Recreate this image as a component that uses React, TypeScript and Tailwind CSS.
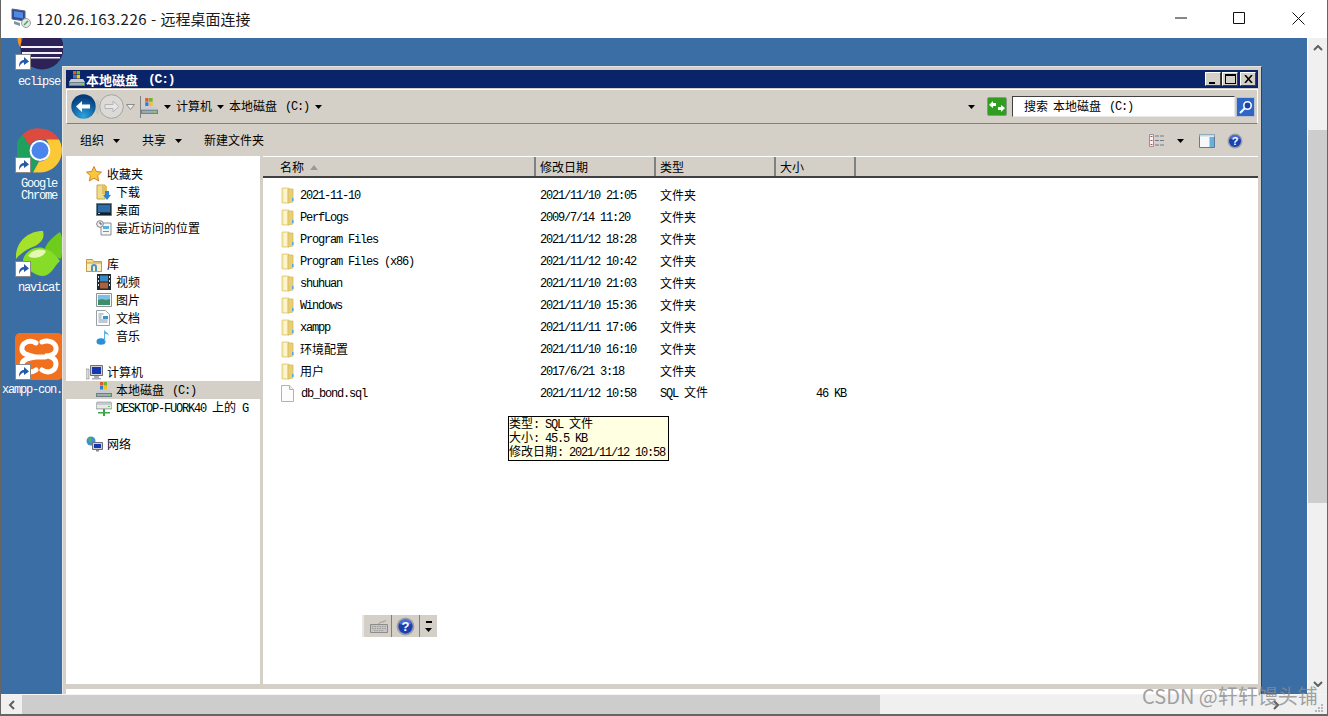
import type { ReactNode } from 'react'

function T({ text, bold }: { text: string; bold?: boolean }) {
  const parts = text.split(/([\u3400-\u9fff]+)/)
  return (
    <span className={`whitespace-pre text-[12px] leading-none ${bold ? 'font-bold' : ''}`}>
      {parts.map((p, i) =>
        /[\u3400-\u9fff]/.test(p) ? (
          <span key={i} className="inline-block font-['Noto_Sans_CJK_SC',sans-serif] leading-none">{p}</span>
        ) : (
          <span key={i} className="inline-block font-['Liberation_Mono',monospace] leading-none tracking-[-1.2px]">{p}</span>
        )
      )}
    </span>
  )
}

function DriveLabel() {
  return (
    <span className="flex items-center">
      <T text="本地磁盘" />
      <span className="ml-[8px] flex"><T text="(C:)" /></span>
    </span>
  )
}

function DriveIcon({ size = 16 }: { size?: number }) {
  return (
    <svg width={size} height={size} viewBox="0 0 16 16" className="shrink-0">
      <path d="M4 0h3v3.500H4z" fill="#e2572b" />
      <path d="M7.500 0h3.500v3.500H7.500z" fill="#6fb52c" />
      <path d="M4 4h3v3.500H4z" fill="#2b7bd8" />
      <path d="M7.500 4H11v3.500H7.500z" fill="#f3c122" />
      <path d="M2 8h12l2 3v4H0v-4z" fill="#c8ccd0" />
      <path d="M0 11h16v4H0z" fill="#6c808a" />
      <path d="M1 12h14v2H1z" fill="#9eabb2" />
      <path d="M12 12h2v2h-2z" fill="#6fdc3c" />
    </svg>
  )
}

function FolderIcon() {
  return (
    <svg width="13" height="17" viewBox="0 0 13 17" className="shrink-0">
      <path d="M1 1h7v15H1z" fill="#f9eaa6" stroke="#dcc777" strokeWidth="0.8" />
      <path d="M7 2h5v13l-5 1z" fill="#e9cf74" stroke="#d4ba62" strokeWidth="0.8" />
      <path d="M3 2h3v13H3z" fill="#fdf6cc" />
      <path d="M11 11h1.500v3H11z" fill="#5aa6de" />
    </svg>
  )
}

function SqlFileIcon() {
  return (
    <svg width="13" height="17" viewBox="0 0 13 17" className="shrink-0">
      <path d="M.5.500h8l4 4v12H.5z" fill="#fdfcfd" stroke="#b4b0b4" />
      <path d="M8.500.500v4h4" fill="#eeeaee" stroke="#b4b0b4" />
    </svg>
  )
}

function NavIcon({ name }: { name: string }) {
  switch (name) {
    case 'star':
      return (
        <svg width="16" height="16" viewBox="0 0 16 16">
          <path d="M8 .5l2.300 5 5.200.6-3.900 3.500 1.100 5.400L8 12.200 3.300 15l1.100-5.400L.5 6.100l5.200-.6z" fill="#f8c83c" stroke="#d8802a" />
        </svg>
      )
    case 'download':
      return (
        <svg width="16" height="17" viewBox="0 0 16 17">
          <path d="M1 1h8v14H1z" fill="#f1dc8b" stroke="#c4a64e" />
          <path d="M6 2h5v8H6z" fill="#dfc164" />
          <path d="M9 7h4v4h2l-4 5-4-5h2z" fill="#2b86d6" />
        </svg>
      )
    case 'desktop':
      return (
        <svg width="16" height="14" viewBox="0 0 16 14">
          <path d="M.5.500h15v12H.5z" fill="#22394f" stroke="#6a7d8c" />
          <path d="M2 2h12v7H2z" fill="#2c6ea8" />
          <path d="M1 10h14v2H1z" fill="#12202c" />
          <path d="M2 10h2v1H2z" fill="#e0c040" />
        </svg>
      )
    case 'recent':
      return (
        <svg width="16" height="16" viewBox="0 0 16 16">
          <path d="M5 3h10v12H5z" fill="#f4f5f6" stroke="#8a8f94" />
          <path d="M7 6h6v3H7z" fill="#5ab0dc" />
          <path d="M7 11h6v1H7z" fill="#8a8f94" />
          <circle cx="4" cy="4" r="3.300" fill="#eef0f1" stroke="#7e8488" />
          <path d="M4 2v2h2" fill="none" stroke="#555" />
        </svg>
      )
    case 'library':
      return (
        <svg width="16" height="15" viewBox="0 0 16 15">
          <path d="M.5 2.500h6l1 2h8v10H.5z" fill="#f2dd90" stroke="#bf9f4c" />
          <path d="M.5 6h15v8.500H.5z" fill="#f8eebc" stroke="#bf9f4c" />
          <path d="M5 14v-4a3 3 0 0 1 6 0v4H9v-4a1 1 0 0 0-2 0v4z" fill="#4f92c8" />
        </svg>
      )
    case 'video':
      return (
        <svg width="16" height="16" viewBox="0 0 16 16">
          <path d="M1 0h14v16H1z" fill="#1e2a30" />
          <path d="M4 1.500h8v6H4z" fill="#3a8ac8" />
          <path d="M4 8.500h8v6H4z" fill="#b0603c" />
          <path d="M2 2h1v2H2zM2 6h1v2H2zM2 10h1v2H2zM13 2h1v2h-1zM13 6h1v2h-1zM13 10h1v2h-1z" fill="#dfe5e8" />
        </svg>
      )
    case 'pictures':
      return (
        <svg width="16" height="14" viewBox="0 0 16 14">
          <path d="M.5.500h15v13H.5z" fill="#f3f4f5" stroke="#8d9398" />
          <path d="M2 2h12v5H2z" fill="#7ec0e4" />
          <path d="M2 7l4-1 4 1 4-1v6H2z" fill="#3d8f6a" />
        </svg>
      )
    case 'doc':
      return (
        <svg width="14" height="16" viewBox="0 0 14 16">
          <path d="M.5.500h9l4 4v11H.5z" fill="#fbfcfd" stroke="#9aa0a6" />
          <path d="M2.500 4h5M2.500 6h3M2.500 8h3M2.500 10h9M2.500 12h9" stroke="#8497a8" />
          <path d="M7 6h5v3H7z" fill="#3f93c0" />
        </svg>
      )
    case 'music':
      return (
        <svg width="14" height="17" viewBox="0 0 14 17">
          <ellipse cx="5" cy="13.500" rx="4.500" ry="3.300" fill="#2b8ed6" />
          <path d="M8 13V1c0 3 5 3 5 7-1-2-3-2-4-2v7z" fill="#58b4e8" />
        </svg>
      )
    case 'computer':
      return (
        <svg width="17" height="15" viewBox="0 0 17 15">
          <path d="M0 4h3v10H0z" fill="#d8dadc" stroke="#888" strokeWidth=".6" />
          <path d="M4.500.500h12v10h-12z" fill="#cfd2d5" stroke="#6c7075" />
          <path d="M6 2h9v7H6z" fill="#1538b0" />
          <path d="M8 11h5v2h2v1.500H6V13h2z" fill="#a9adb1" />
        </svg>
      )
    case 'netdrive':
      return (
        <svg width="16" height="15" viewBox="0 0 16 15">
          <path d="M1 1h14l1 3v4H0V4z" fill="#c7cbce" stroke="#8b9196" strokeWidth=".6" />
          <path d="M1 4h14v3H1z" fill="#e7e9ea" />
          <path d="M12 5h2v1h-2z" fill="#55cc40" />
          <path d="M7 8h2v3h5v1.500H9V15H7v-2.500H2V11h5z" fill="#3aa844" />
        </svg>
      )
    default:
      return (
        <svg width="17" height="16" viewBox="0 0 17 16">
          <circle cx="5" cy="5" r="4.500" fill="#3d8fd0" />
          <path d="M2 3l3-2 1 3-2 3zM7 6l1 2-2 1z" fill="#58b04a" />
          <path d="M6.500 6.500h10v7h-10z" fill="#cdd1d4" stroke="#6c7075" />
          <path d="M8 8h7v4H8z" fill="#1538b0" />
          <path d="M10 14h3v1.500h-3z" fill="#8a8e92" />
        </svg>
      )
  }
}

const navRows = [
  { icon: 'star', label: '收藏夹' },
  { icon: 'download', label: '下载', sub: true },
  { icon: 'desktop', label: '桌面', sub: true },
  { icon: 'recent', label: '最近访问的位置', sub: true },
  null,
  { icon: 'library', label: '库' },
  { icon: 'video', label: '视频', sub: true },
  { icon: 'pictures', label: '图片', sub: true },
  { icon: 'doc', label: '文档', sub: true },
  { icon: 'music', label: '音乐', sub: true },
  null,
  { icon: 'computer', label: '计算机' },
  { icon: 'drive', label: '', sub: true, selected: true },
  { icon: 'netdrive', label: 'DESKTOP-FUORK40 上的 G', sub: true },
  null,
  { icon: 'network', label: '网络' },
]

const files = [
  { name: '2021-11-10', date: '2021/11/10 21:05', type: '文件夹' },
  { name: 'PerfLogs', date: '2009/7/14 11:20', type: '文件夹' },
  { name: 'Program Files', date: '2021/11/12 18:28', type: '文件夹' },
  { name: 'Program Files (x86)', date: '2021/11/12 10:42', type: '文件夹' },
  { name: 'shuhuan', date: '2021/11/10 21:03', type: '文件夹' },
  { name: 'Windows', date: '2021/11/10 15:36', type: '文件夹' },
  { name: 'xampp', date: '2021/11/11 17:06', type: '文件夹' },
  { name: '环境配置', date: '2021/11/10 16:10', type: '文件夹' },
  { name: '用户', date: '2017/6/21 3:18', type: '文件夹' },
  { name: 'db_bond.sql', date: '2021/11/12 10:58', type: 'SQL 文件', size: '46 KB', file: true },
]

function Caret({ className = '' }: { className?: string }) {
  return (
    <svg width="7" height="4" viewBox="0 0 7 4" className={`shrink-0 ${className}`}>
      <path d="M0 0h7L3.500 4z" fill="#000" />
    </svg>
  )
}

function CaptionButton({ children, className = '' }: { children: ReactNode; className?: string }) {
  return (
    <div className={`flex h-[14px] w-[16px] items-center justify-center border border-t-white border-l-white border-r-[#404040] border-b-[#404040] bg-[#d4d0c8] ${className}`}>
      {children}
    </div>
  )
}

function HelpIcon({ size = 16, className = '' }: { size?: number; className?: string }) {
  return (
    <svg width={size} height={size} viewBox="0 0 16 16" className={`shrink-0 ${className}`}>
      <circle cx="8" cy="8" r="7.500" fill="#9a9ea8" />
      <circle cx="8" cy="8" r="6" fill="#1c3fb0" />
      <path d="M3 6a5 4 0 0 1 10 0z" fill="#4a6fd0" />
      <text x="8" y="12" textAnchor="middle" fontSize="11" fontWeight="700" fill="#fff" fontFamily="Liberation Sans, sans-serif">?</text>
    </svg>
  )
}

function Shortcut() {
  return (
    <div className="absolute bottom-0 left-0 flex h-[16px] w-[16px] items-center justify-center border border-[#8a8a8a] bg-white">
      <svg width="12" height="12" viewBox="0 0 12 12">
        <path d="M2 11c0-5 2-7 5-7V1l5 4.500L7 9V6.500C5 6.500 3.500 8 2 11z" fill="#2559a8" />
      </svg>
    </div>
  )
}

function DesktopIcon({ x, y, labelX, lines, children, w = 48, h = 48, gap = 5 }: { x: number; y: number; labelX: number; lines: string[]; children: ReactNode; w?: number; h?: number; gap?: number }) {
  return (
    <>
      <div className="absolute" style={{ left: x, top: y, width: w, height: h }}>
        {children}
        <Shortcut />
      </div>
      <div className="absolute flex flex-col items-center text-white" style={{ left: labelX, top: y + h + gap, width: 72 }}>
        {lines.map(l => (
          <div key={l} className="flex h-[12px] items-center"><T text={l} /></div>
        ))}
      </div>
    </>
  )
}

export default function App() {
  return (
    <div className="flex h-[716px] w-[1328px] flex-col overflow-hidden border-x border-b-2 border-[#666666] bg-white">
      {/* rdp title bar */}
      <div className="flex h-[38px] shrink-0 items-center bg-white pb-[2px] pl-[10px]">
        <svg width="20" height="20" viewBox="0 0 20 20" className="shrink-0">
          <path d="M1 1l13 2v10L1 11z" fill="#2b4a9c" stroke="#55607a" />
          <path d="M3 3l9 1.500v6L3 9z" fill="#4f8ae0" />
          <path d="M3 13l6 2v3l-6-2z" fill="#8890a0" />
          <circle cx="15" cy="15" r="4.500" fill="#e4e6e8" stroke="#9a9ea2" />
          <path d="M13 17l4-4" stroke="#3aa844" strokeWidth="1.500" />
        </svg>
        <span className="ml-[5px] whitespace-pre font-['Noto_Sans_CJK_SC',sans-serif] text-[15px] leading-none text-[#1a1a1a]">
          <span className="tracking-[0.5px]">120.26.163.226 - </span>
          <span>远程桌面连接</span>
        </span>
        <div className="ml-auto flex items-center">
          <svg width="12" height="12" viewBox="0 0 12 12" className="mr-[46px]"><path d="M0 6h12" stroke="#111" /></svg>
          <svg width="12" height="12" viewBox="0 0 12 12" className="mr-[47px]"><path d="M.5.500h11v11H.5z" fill="none" stroke="#111" /></svg>
          <svg width="13" height="13" viewBox="0 0 13 13" className="mr-[22px]"><path d="M.5.500l12 12M12.500.500l-12 12" stroke="#111" /></svg>
        </div>
      </div>

      <div className="flex min-h-0 flex-1">
        {/* remote desktop */}
        <div className="relative min-w-0 flex-1 overflow-hidden bg-[#3a6ea5]">
          <DesktopIcon x={14} y={-17} labelX={2} lines={['eclipse']} h={49}>
            <svg width="48" height="49" viewBox="0 0 48 49" className="absolute left-0 top-0">
              <path d="M6 0C2 8 1 20 5 26l3-2C5 18 5 8 8 0z" fill="#f7941e" />
              <circle cx="27" cy="27" r="21.500" fill="#2c2255" />
              <path d="M6 25h42v2H6zM7 31h40v2H7zM9 36h36v1.500H9z" fill="#f2f0f8" />
            </svg>
          </DesktopIcon>

          <DesktopIcon x={14} y={90} labelX={2} lines={['Google', 'Chrome']} w={48} h={45} gap={4}>
            <svg width="46" height="45" viewBox="0 0 46 45" className="absolute left-[2px] top-0">
              <path d="M23 0.500a22 22 0 0 1 19 11H23a11 11 0 0 0-10 6L5 7A22 22 0 0 1 23 .5z" fill="#dd4b3e" />
              <path d="M5 7l8 11a11 11 0 0 0 9 15l-6 11A22 22 0 0 1 5 7z" fill="#1fa15d" />
              <path d="M42 11.500a22 22 0 0 1-19 33h-7l6-11a11 11 0 0 0 10-16 11 11 0 0 0-3-6z" fill="#fcc934" />
              <circle cx="23" cy="22.500" r="10.500" fill="#fff" />
              <circle cx="23" cy="22.500" r="8.500" fill="#4a85ee" />
            </svg>
          </DesktopIcon>

          <DesktopIcon x={14} y={193} labelX={2} lines={['navicat']} h={46} gap={4}>
            <svg width="48" height="46" viewBox="0 0 48 46" className="absolute left-0 top-0">
              <path d="M1 28C0 12 12 0 28 0c2 7-2 12-8 15C12 18 6 22 1 28z" fill="#a6e22a" />
              <path d="M30 17c3-7 9-12 15-16 4 8 3 17 1 27-6-2-12-6-16-11z" fill="#70cc1c" />
              <path d="M8 29c2-9 12-14 20-12 8 2 13 7 17 13-6 5-9 15-17 15-8 0-17-7-20-16z" fill="#86dc26" />
              <path d="M13 25c4-6 12-8 18-5-2 6-11 9-18 5z" fill="#e6f9b4" />
            </svg>
          </DesktopIcon>

          <DesktopIcon x={14} y={295} labelX={-5} lines={['xampp-con.']} h={47} gap={3}>
            <div className="absolute inset-0 rounded-[5px] bg-[#f0701e]" />
            <svg width="48" height="47" viewBox="0 0 48 47" className="absolute left-0 top-0">
              <path d="M27 9C34 6 42 10 41 17 40 22 35 23 30 23 35 23 41 25 41 31 41 38 33 41 27 37M21 10C14 6 6 10 7 17 8 22 14 22 21 24 14 25 7 26 7 32 7 39 15 41 21 37M21 24H30" fill="none" stroke="#fff" strokeWidth="5" strokeLinecap="round" />
            </svg>
          </DesktopIcon>

          {/* explorer window */}
          <div className="absolute left-[61px] top-[28px] flex h-[628px] w-[1200px] flex-col border border-t-[#e6e4de] border-l-[#e6e4de] border-r-[#404040] border-b-0 bg-[#d4d0c8] px-[3px] pt-[3px]">
            <div className="flex h-[18px] shrink-0 items-center bg-[#0a246a] pl-[3px] text-white">
              <DriveIcon />
              <span className="ml-[1px] font-['Noto_Sans_CJK_SC',sans-serif] text-[13px] font-bold leading-none">本地磁盘</span>
              <span className="ml-[10px] font-['Liberation_Mono',monospace] text-[13px] font-bold leading-none tracking-[-1.2px]">(C:)</span>
              <div className="ml-auto mr-[2px] flex items-center">
                <CaptionButton>
                  <div className="mt-[7px] mr-[3px] h-[2px] w-[6px] bg-black" />
                </CaptionButton>
                <CaptionButton className="ml-[1px]">
                  <div className="h-[10px] w-[11px] border border-t-2 border-black" />
                </CaptionButton>
                <CaptionButton className="ml-[2px]">
                  <svg width="9" height="8" viewBox="0 0 9 8"><path d="M1 0l7 8M8 0L1 8" stroke="#000" strokeWidth="1.600" /></svg>
                </CaptionButton>
              </div>
            </div>

            {/* address row */}
            <div className="mt-[1px] flex h-[35px] shrink-0 items-center border border-t-white border-l-white border-r-white border-b-[#808080] bg-[#d4d0c8] pl-[4px]">
              <svg width="25" height="25" viewBox="0 0 25 25" className="shrink-0">
                <defs>
                  <radialGradient id="backBlue" cx="0.5" cy="0.9" r="0.8">
                    <stop offset="0" stopColor="#2aa4e0" />
                    <stop offset="1" stopColor="#063a78" />
                  </radialGradient>
                </defs>
                <circle cx="12.500" cy="12.500" r="12.200" fill="url(#backBlue)" />
                <path d="M5 12.500l6-5.500v3.500h8v4h-8V18z" fill="#fff" />
              </svg>
              <div className="h-[14px] w-[3px] shrink-0 bg-[#c8c6c2]" />
              <svg width="25" height="25" viewBox="0 0 25 25" className="shrink-0">
                <circle cx="12.500" cy="12.500" r="11.800" fill="#dcdad6" stroke="#a4a4a4" />
                <path d="M20 12.500l-6-5.500v3.500H6v4h8V18z" fill="#e8e6e2" stroke="#b4b4b4" />
              </svg>
              <svg width="9" height="6" viewBox="0 0 9 6" className="ml-[2px] shrink-0"><path d="M.5.500h8L4.500 5.500z" fill="#eee" stroke="#8a8a8a" /></svg>
              <div className="ml-[5px] flex h-[22px] items-center border-l border-[#808080]">
                <DriveIcon size={17} />
              </div>
              <Caret className="ml-[6px]" />
              <span className="ml-[5px] flex items-center"><T text="计算机" /></span>
              <Caret className="ml-[5px]" />
              <span className="ml-[5px]"><DriveLabel /></span>
              <Caret className="ml-[6px]" />
              <Caret className="ml-[646px]" />
              <div className="ml-[12px] flex h-[19px] w-[20px] shrink-0 items-center justify-center rounded-[2px] border border-[#8a9a8a] bg-[#2f9e1f]">
                <svg width="16" height="13" viewBox="0 0 16 13">
                  <path d="M0 5l4-4v2h3v3H4v2zM16 8l-4 4v-2H9V7h3V5z" fill="#fff" />
                </svg>
              </div>
              <div className="ml-[5px] flex h-[21px] w-[223px] shrink-0 items-center border border-t-[#404040] border-l-[#404040] border-b-[#e8e8e8] border-r-[#e8e8e8] bg-white pl-[11px]">
                <T text="搜索" />
                <span className="ml-[5px]"><DriveLabel /></span>
              </div>
              <div className="ml-[1px] flex h-[20px] w-[19px] shrink-0 items-center justify-center border border-[#b8c0cc] bg-[#2e66c8]">
                <svg width="14" height="14" viewBox="0 0 14 14">
                  <circle cx="8.500" cy="5.500" r="3.700" fill="#1c3fb0" stroke="#fff" strokeWidth="1.600" />
                  <path d="M6 8l-5 5" stroke="#fff" strokeWidth="2" />
                </svg>
              </div>
            </div>

            {/* command bar */}
            <div className="flex h-[32px] shrink-0 items-center pl-[14px] pt-[1px]">
              <T text="组织" />
              <Caret className="ml-[9px]" />
              <span className="ml-[22px] flex"><T text="共享" /></span>
              <Caret className="ml-[9px]" />
              <span className="ml-[22px] flex"><T text="新建文件夹" /></span>
              <div className="ml-auto mr-[15px] flex items-center">
                <svg width="16" height="13" viewBox="0 0 16 13">
                  <path d="M.5.500h4v12h-4z" fill="#f4f4f4" stroke="#8a94b0" />
                  <path d="M1.500 2h2v1h-2zM1.500 6h2v1h-2zM1.500 10h2v1h-2z" fill="#d04040" />
                  <path d="M6 2h4M11 2h4M6 6.500h4M11 6.500h4M6 11h4M11 11h4" stroke="#707a8a" />
                </svg>
                <Caret className="ml-[12px]" />
                <svg width="16" height="14" viewBox="0 0 16 14" className="ml-[15px]">
                  <path d="M.5.500h15v13H.5z" fill="#f6f8fa" stroke="#5c7c98" />
                  <path d="M.5.500h15v2H.5z" fill="#c8d8e4" />
                  <path d="M10.500 3H15v10h-4.500z" fill="#68b0d8" />
                </svg>
                <HelpIcon size={16} className="ml-[12px]" />
              </div>
            </div>

            <div className="flex min-h-0 flex-1 bg-white">
              {/* nav tree */}
              <div className="w-[194px] shrink-0 border-t border-white bg-white pt-[8px]">
                {navRows.map((row, i) =>
                  row ? (
                    <div
                      key={i}
                      className={`flex h-[18px] items-center ${row.sub ? 'pl-[30px]' : 'pl-[20px]'} ${row.selected ? 'bg-[#d4d0c8]' : ''}`}
                    >
                      <div className={`flex shrink-0 items-center ${row.sub ? 'w-[20px]' : 'w-[21px]'}`}>
                        {row.icon === 'drive' ? <DriveIcon /> : <NavIcon name={row.icon} />}
                      </div>
                      {row.icon === 'drive' ? <DriveLabel /> : <T text={row.label} />}
                    </div>
                  ) : (
                    <div key={i} className="h-[18px]" />
                  )
                )}
              </div>
              <div className="w-[3px] shrink-0 bg-[#d4d0c8]" />

              {/* file list */}
              <div className="flex min-w-0 flex-1 flex-col">
                <div className="flex h-[22px] shrink-0 items-center border-t border-b-2 border-t-white border-b-[#404040] bg-[#d4d0c8]">
                  <div className="flex h-full w-[273px] items-center gap-[6px] border-r-2 border-r-[#808080] pl-[17px] pt-[2px]">
                    <T text="名称" />
                    <svg width="8" height="5" viewBox="0 0 8 5"><path d="M4 0l4 5H0z" fill="#9a9a9a" /></svg>
                  </div>
                  <div className="flex h-full w-[120px] items-center border-r-2 border-r-[#808080] pl-[4px] pt-[2px]"><T text="修改日期" /></div>
                  <div className="flex h-full w-[120px] items-center border-r-2 border-r-[#808080] pl-[4px] pt-[2px]"><T text="类型" /></div>
                  <div className="flex h-full w-[80px] items-center border-r-2 border-r-[#808080] pl-[4px] pt-[2px]"><T text="大小" /></div>
                </div>
                <div className="pt-[6px]">
                  {files.map(f => (
                    <div key={f.name} className="flex h-[22px] items-center">
                      <div className="flex w-[277px] shrink-0 items-center pl-[18px]">
                        <div className={`shrink-0 ${f.file ? 'w-[20px]' : 'w-[19px]'}`}>{f.file ? <SqlFileIcon /> : <FolderIcon />}</div>
                        <T text={f.name} />
                      </div>
                      <div className="flex w-[120px] shrink-0"><T text={f.date} /></div>
                      <div className="flex w-[120px] shrink-0"><T text={f.type} /></div>
                      <div className="flex w-[66px] shrink-0 justify-end">{f.size && <T text={f.size} />}</div>
                    </div>
                  ))}
                </div>
              </div>
            </div>
            <div className="h-[5px] shrink-0 bg-[#d4d0c8]" />
            <div className="h-[5px] shrink-0 bg-white" />
          </div>

          {/* file tooltip */}
          <div className="absolute left-[507px] top-[378px] flex h-[45px] w-[161px] flex-col justify-center border border-black bg-[#ffffe1] pb-[1px] text-black">
            <div className="flex h-[14px] items-center"><T text="类型: SQL 文件" /></div>
            <div className="flex h-[14px] items-center"><T text="大小: 45.5 KB" /></div>
            <div className="flex h-[14px] items-center"><T text="修改日期: 2021/11/12 10:58" /></div>
          </div>

          {/* language bar */}
          <div className="absolute left-[361px] top-[577px] flex h-[22px] w-[75px] items-center border-l-2 border-[#e8e8e8] bg-[#d4d0c8]">
            <div className="flex h-full w-[28px] items-center justify-center border-r border-[#808080] pl-[3px]">
              <svg width="20" height="14" viewBox="0 0 20 14">
                <path d="M1.500 5.500h17v8h-17z" fill="#c8c6c2" stroke="#8c8c8c" />
                <path d="M3 7.500h14M3 9.500h14M5 11.500h10" stroke="#9a9a9a" strokeDasharray="1.500 1" />
                <path d="M10 5c0-3 5-1 7-4" fill="none" stroke="#9a9a9a" />
              </svg>
            </div>
            <div className="flex h-full w-[28px] items-center justify-center border-r border-[#808080]">
              <HelpIcon size={19} />
            </div>
            <div className="flex flex-1 flex-col items-center gap-[5px]">
              <div className="h-[2px] w-[6px] bg-black" />
              <Caret />
            </div>
          </div>
        </div>

        {/* vertical scrollbar */}
        <div className="flex w-[20px] shrink-0 flex-col border-l border-white bg-[#f0f0f0]">
          <div className="flex h-[20px] items-center justify-center">
            <svg width="10" height="6" viewBox="0 0 10 6"><path d="M1 5l4-4 4 4" fill="none" stroke="#606060" strokeWidth="2" /></svg>
          </div>
          <div className="h-[72px]" />
          <div className="h-[373px] bg-[#cdcdcd]" />
          <div className="flex-1" />
          <div className="flex h-[20px] items-center justify-center">
            <svg width="10" height="6" viewBox="0 0 10 6"><path d="M1 1l4 4 4-4" fill="none" stroke="#606060" strokeWidth="2" /></svg>
          </div>
        </div>
      </div>

      {/* horizontal scrollbar */}
      <div className="relative flex h-[20px] shrink-0 border-t border-[#f4f4f4] bg-[#f0f0f0]">
        <div className="flex w-[21px] items-center justify-center">
          <svg width="7" height="10" viewBox="0 0 7 10"><path d="M6 1L2 5l4 4" fill="none" stroke="#606060" strokeWidth="2" /></svg>
        </div>
        <div className="w-[858px] bg-[#cdcdcd]" />
        <div className="flex-1" />
        <div className="flex w-[34px] items-center">
          <svg width="7" height="10" viewBox="0 0 7 10"><path d="M1 1l4 4-4 4" fill="none" stroke="#606060" strokeWidth="2" /></svg>
        </div>
        <div className="flex w-[20px] items-end justify-end pb-[1px] pr-[3px]">
          <svg width="9" height="9" viewBox="0 0 9 9"><path d="M6 0h2v2H6zM3 3h2v2H3zM6 3h2v2H6zM0 6h2v2H0zM3 6h2v2H3zM6 6h2v2H6z" fill="#b8b8b8" /></svg>
        </div>
        <span className="absolute -top-[9px] left-[1141px] whitespace-nowrap font-['Noto_Sans_CJK_SC',sans-serif] text-[20px] leading-none text-[#8a8a8a]/80">CSDN @轩轩馒头铺</span>
      </div>
    </div>
  )
}
